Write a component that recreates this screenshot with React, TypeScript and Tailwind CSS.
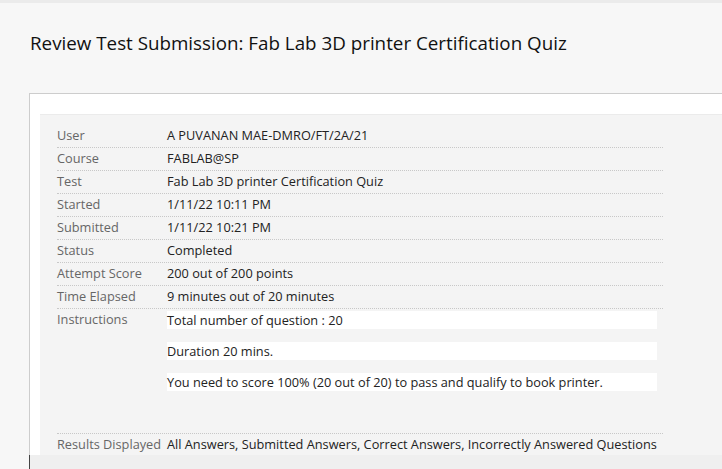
import React from "react";

const rows: [string, string][] = [
  ["User", "A PUVANAN MAE-DMRO/FT/2A/21"],
  ["Course", "FABLAB@SP"],
  ["Test", "Fab Lab 3D printer Certification Quiz"],
  ["Started", "1/11/22 10:11 PM"],
  ["Submitted", "1/11/22 10:21 PM"],
  ["Status", "Completed"],
  ["Attempt Score", "200 out of 200 points"],
  ["Time Elapsed", "9 minutes out of 20 minutes"],
];

export default function App() {
  return (
    <div
      className="w-[722px] h-[469px] overflow-hidden bg-[#f7f7f7] flex flex-col"
      style={{ fontFamily: '"Open Sans", sans-serif' }}
    >
      <div className="h-[3px] bg-[#ebebeb] shrink-0" />
      <h1 className="pl-[30px] pt-[28px] h-[90px] text-[18.8px] leading-[24px] text-[#111] font-normal shrink-0 whitespace-nowrap">
        Review Test Submission: Fab Lab 3D printer Certification Quiz
      </h1>
      <div className="ml-[29px] flex-1 flex flex-col min-h-0">
        <div className="bg-white border-l border-t border-[#cdcdcd] pl-[10px] pt-[20px] flex-1 min-h-0">
          <div className="bg-[#f4f4f4] border-t border-[#ebebeb] pl-[17px] pt-[10px] h-[341px]">
            <div className="w-[606px] text-[12.75px] leading-[21px]">
              {rows.map(([k, v]) => (
                <div key={k} className="flex border-b border-dotted border-[#c8c8c8] h-[23px]">
                  <div className="w-[110px] text-[#666]">{k}</div>
                  <div className="text-[#222]">{v}</div>
                </div>
              ))}
              <div className="flex border-b border-dotted border-[#c8c8c8]">
                <div className="w-[110px] text-[#666]">Instructions</div>
                <div className="w-[490px] pt-[2px] pb-[42px] flex flex-col gap-[13px] text-[#222]">
                  <div className="bg-white h-[18px] leading-[18px]">Total number of question : 20</div>
                  <div className="bg-white h-[18px] leading-[18px]">Duration 20 mins.</div>
                  <div className="bg-white h-[18px] leading-[18px]">
                    You need to score 100% (20 out of 20) to pass and qualify to book printer.
                  </div>
                </div>
              </div>
              <div className="flex h-[23px]">
                <div className="w-[110px] text-[#666] whitespace-nowrap">Results Displayed</div>
                <div className="text-[#222] whitespace-nowrap">
                  All Answers, Submitted Answers, Correct Answers, Incorrectly Answered Questions
                </div>
              </div>
            </div>
          </div>
        </div>
        <div className="h-[14px] bg-[#efefef] border-l border-[#444] shrink-0" />
      </div>
    </div>
  );
}
